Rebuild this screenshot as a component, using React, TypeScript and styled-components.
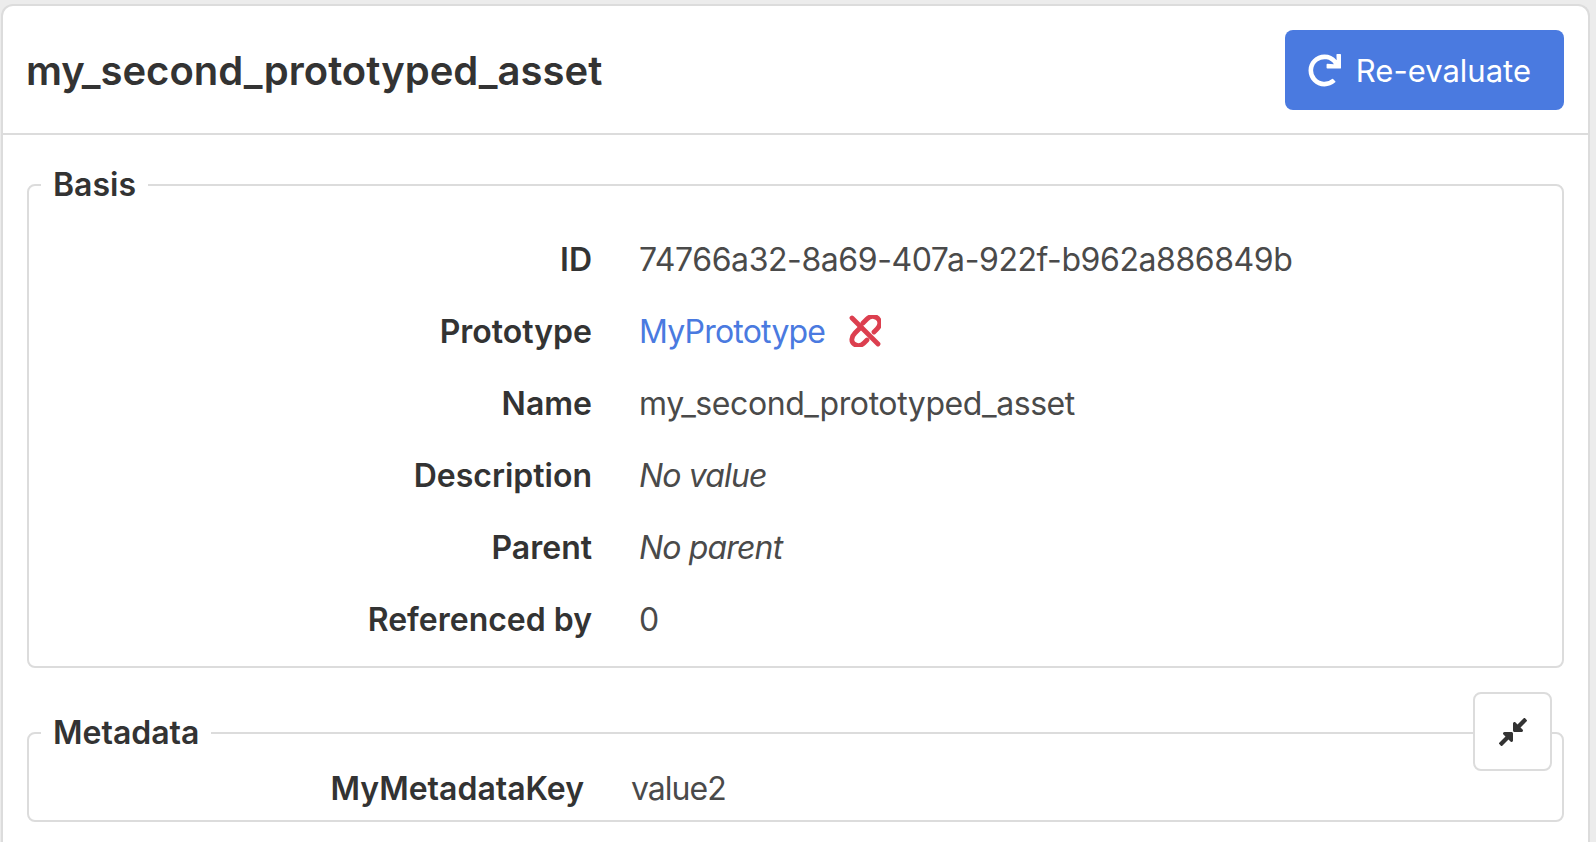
import React from "react";
import styled, { createGlobalStyle } from "styled-components";
import { FaCompressAlt, FaRedo } from "react-icons/fa";

const GlobalStyle = createGlobalStyle`
  html, body {
    margin: 0;
    padding: 0;
    height: 100%;
    background: #ececec;
    overflow: hidden;
  }
  * {
    box-sizing: border-box;
  }
  body {
    font-family: Inter, "Liberation Sans", sans-serif;
    color: #333333;
  }
`;

const rows = [
  { label: "ID", value: "74766a32-8a69-407a-922f-b962a886849b" },
  { label: "Prototype", value: "MyPrototype", link: true },
  { label: "Name", value: "my_second_prototyped_asset" },
  { label: "Description", value: "No value", empty: true },
  { label: "Parent", value: "No parent", empty: true },
  { label: "Referenced by", value: "0" },
];

const UnlinkIcon = () => (
  <svg width="32" height="32" viewBox="0 0 32 32" fill="none" stroke="#dc3f4f" strokeWidth="4.8" strokeLinecap="round">
    <path d="M3 3 L29 29" />
    <path d="M14 8 L18 4 C22 0 28 1 30 5 C32 9 30 12 28 14 L25 17" />
    <path d="M12 12 L6 18 C2 22 2 27 5 29 C9 32 13 30 15 28 L18 25" />
  </svg>
);

const App = () => {
  return (
    <Page>
      <GlobalStyle />
      <Card>
        <Header>
          <Title>my_second_prototyped_asset</Title>
          <PrimaryButton>
            <FaRedo size={33} />
            Re-evaluate
          </PrimaryButton>
        </Header>
        <Body>
          <Group>
            <Legend>Basis</Legend>
            <BasisList>
              {rows.map((row) => (
                <Row key={row.label}>
                  <Label>{row.label}</Label>
                  <Value $empty={row.empty}>
                    {row.link ? (
                      <>
                        <ValueLink>{row.value}</ValueLink>
                        <UnlinkIcon />
                      </>
                    ) : (
                      row.value
                    )}
                  </Value>
                </Row>
              ))}
            </BasisList>
          </Group>
          <MetadataWrap>
            <CollapseButton>
              <FaCompressAlt size={32} />
            </CollapseButton>
            <Group>
              <Legend>Metadata</Legend>
              <MetadataRow>
                <MetadataLabel>MyMetadataKey</MetadataLabel>
                <MetadataValue>value2</MetadataValue>
              </MetadataRow>
            </Group>
          </MetadataWrap>
        </Body>
      </Card>
    </Page>
  );
};

export default App;

const Page = styled.div`
  height: 100vh;
  padding: 4px 6px 0 1px;
`;
const Card = styled.div`
  height: 100%;
  background-color: white;
  border: 2px solid #dcdcdc;
  border-bottom: none;
  border-radius: 12px 12px 0 0;
`;
const Header = styled.div`
  display: flex;
  justify-content: space-between;
  align-items: center;
  height: 129px;
  padding: 0 24px 0 23px;
  border-bottom: 2px solid #dcdcdc;
`;
const Title = styled.h1`
  margin: 0;
  padding-top: 2px;
  font-size: 40px;
  font-weight: 600;
  line-height: 1.2;
`;
const PrimaryButton = styled.button`
  display: flex;
  align-items: center;
  gap: 15px;
  height: 80px;
  padding: 2px 33px 0 23px;
  border: none;
  border-radius: 8px;
  background-color: #4a7ae0;
  color: white;
  font-family: inherit;
  font-size: 31px;
`;
const Body = styled.div`
  padding: 30px 24px 0;
`;
const Group = styled.fieldset`
  margin: 0;
  padding: 0;
  border: 2px solid #dcdcdc;
  border-radius: 8px;
`;
const Legend = styled.legend`
  margin-left: 12px;
  padding: 0 12px;
  font-size: 32px;
  font-weight: 600;
  line-height: 40px;
`;
const BasisList = styled.div`
  display: flex;
  flex-direction: column;
  padding: 18px 0 11px;
`;
const Row = styled.div`
  display: flex;
  align-items: center;
  gap: 47px;
  height: 72px;
`;
const Label = styled.div`
  width: 563px;
  text-align: right;
  font-size: 32px;
  font-weight: 600;
`;
const Value = styled.div<{ $empty?: boolean }>`
  display: flex;
  align-items: center;
  gap: 24px;
  font-size: 32px;
  letter-spacing: ${({ $empty }) => ($empty ? "-0.85px" : "-0.42px")};
  color: #4a4a4a;
  font-style: ${({ $empty }) => ($empty ? "italic" : "normal")};
`;
const ValueLink = styled.a`
  color: #4a7ae0;
  letter-spacing: -0.8px;
`;
const MetadataWrap = styled.div`
  position: relative;
  margin-top: 45px;
`;
const MetadataRow = styled(Row)`
  height: 67px;
  padding-top: 3px;
`;
const MetadataLabel = styled(Label)`
  width: 555px;
`;
const MetadataValue = styled(Value)`
  letter-spacing: -1px;
`;
const CollapseButton = styled.button`
  position: absolute;
  top: -21px;
  right: 12px;
  z-index: 1;
  display: flex;
  align-items: center;
  justify-content: center;
  width: 79px;
  height: 79px;
  border: 2px solid #dcdcdc;
  border-radius: 8px;
  background-color: white;
  color: #333333;
`;
